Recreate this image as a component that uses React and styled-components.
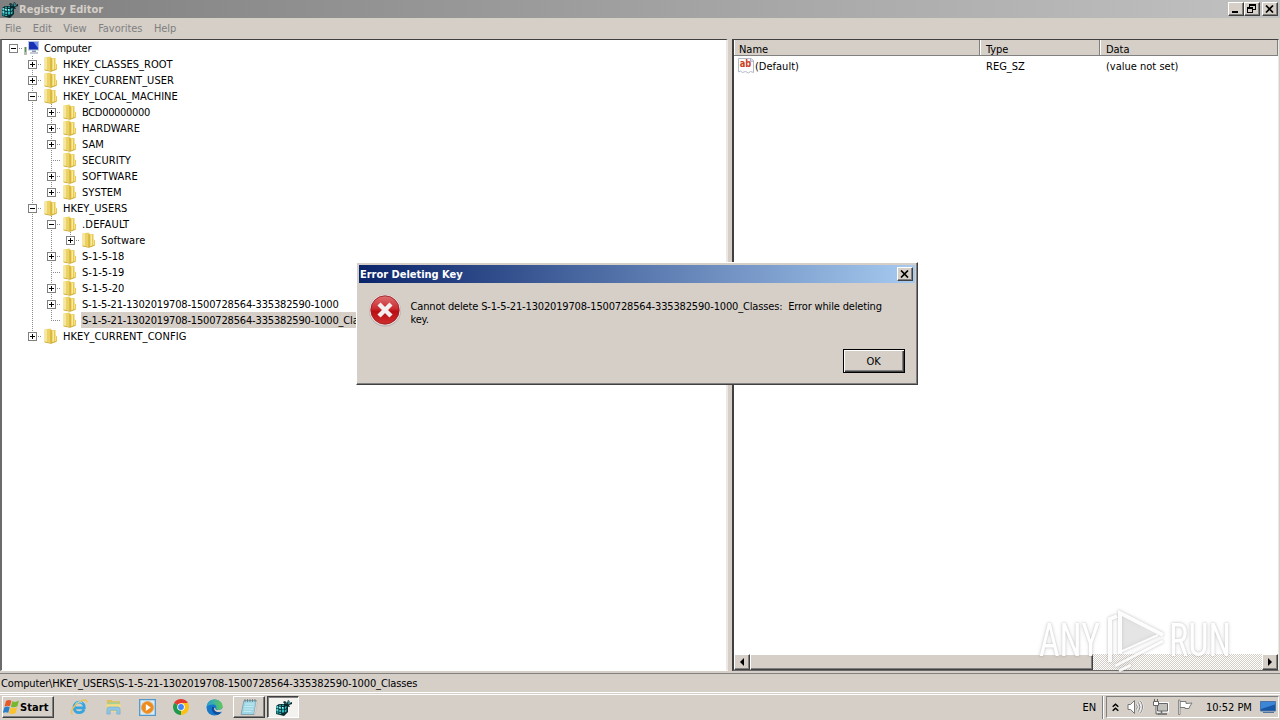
import React from "react";
import styled, { createGlobalStyle, css } from "styled-components";

const TREE = [
  { label: "Computer", level: 0, state: "open", root: true, track: -0.25 },
  { label: "HKEY_CLASSES_ROOT", level: 1, state: "closed" },
  { label: "HKEY_CURRENT_USER", level: 1, state: "closed" },
  { label: "HKEY_LOCAL_MACHINE", level: 1, state: "open" },
  { label: "BCD00000000", level: 2, state: "closed", track: -0.32 },
  { label: "HARDWARE", level: 2, state: "closed" },
  { label: "SAM", level: 2, state: "closed" },
  { label: "SECURITY", level: 2 },
  { label: "SOFTWARE", level: 2, state: "closed", track: 0.15 },
  { label: "SYSTEM", level: 2, state: "closed", last: true },
  { label: "HKEY_USERS", level: 1, state: "open" },
  { label: ".DEFAULT", level: 2, state: "open", track: 0.2 },
  { label: "Software", level: 3, state: "closed", last: true, track: 0.1 },
  { label: "S-1-5-18", level: 2, state: "closed" },
  { label: "S-1-5-19", level: 2 },
  { label: "S-1-5-20", level: 2, state: "closed" },
  {
    label: "S-1-5-21-1302019708-1500728564-335382590-1000",
    level: 2,
    state: "closed",
    track: -0.17,
  },
  {
    label: "S-1-5-21-1302019708-1500728564-335382590-1000_Classes",
    level: 2,
    last: true,
    selected: true,
    track: -0.17,
  },
  { label: "HKEY_CURRENT_CONFIG", level: 1, state: "closed", last: true, track: 0.07 },
];

const MENU = ["File", "Edit", "View", "Favorites", "Help"];

function RegeditIcon() {
  return (
    <svg width="17" height="17" viewBox="0 0 17 17">
      <path d="M1 7l3-2h7l2 1v7l-4 4-8-2z" fill="#062a2e" />
      <path
        d="M1.500 7.200h2v2.400h-2zM4.200 7.700h2v2.400h-2zM7 8h2v2.400H7zM1.500 10.300h2v2.400h-2zM4.200 10.800h2v2.400h-2zM7 11.100h2v2.400H7zM1.500 13.300h2v1.200h-2zM4.200 13.900h2v1.200h-2zM9.800 8l1.700-1.200v2.300L9.800 10.300zM9.800 11.300l1.700-1.200v2.300l-1.700 1.200zM4 5.700h2v1H4zM7 5.700h2v1H7z"
        fill="#32bcc0"
      />
      <path d="M1.500 7.200h1.200v1.200H1.500zM4.200 7.700h1.200v1.200H4.200zM1.500 10.300h1.200v1.200H1.500zM7 8h1v1.200H7z" fill="#c2ffff" />
      <path d="M8 3l2-1 2 2 1-3 1.500 1v2L17 3v2l-3 1 1 2-3-.5-2-2z" fill="#082629" />
      <path d="M10 3.500l1.500 1.500M13.300 2v3l2-1" stroke="#46b9bd" strokeWidth=".8" fill="none" />
    </svg>
  );
}

function ComputerIcon() {
  return (
    <svg width="16" height="16" viewBox="0 0 16 16">
      <path d="M1 7h3v8H1z" fill="#b7bdb2" />
      <path d="M2.500 7v5" stroke="#4f9a4a" />
      <path d="M5 1h11v9.500H5z" fill="#b9c5dc" />
      <path d="M6 2h9v7.500H6z" fill="#1730b4" />
      <path d="M10.500 2H15v6z" fill="#7390e8" />
      <path d="M9 10.500h4V12H9z" fill="#8c98b0" />
      <path d="M7 12h8v2H7z" fill="#c3cad6" />
    </svg>
  );
}

function FolderIcon() {
  return (
    <svg width="16" height="16" viewBox="0 0 16 16">
      <path d="M2.500 1.500l6-1 1 1V15l-7-1.200z" fill="#ecd265" />
      <path d="M2.500 1.500L5 1.100v13l-2.500-.4z" fill="#f6e7a0" />
      <path d="M9 2.500l4.500-.5v5.500l1.500.8v5l-6 2.200z" fill="#e9c84e" />
      <path d="M10.500 3H12v10.500l-1.500.7z" fill="#f7eca2" />
      <path d="M13 8h1v5.500h-1z" fill="#f4e18a" />
      <path d="M9 2v13" stroke="#cba629" />
      <path d="M2.500 14L9 15.300l5.500-2" stroke="#cfae3c" fill="none" />
    </svg>
  );
}

function StringIcon() {
  return (
    <svg width="16" height="16" viewBox="0 0 16 16">
      <path d="M.5.5H13l2.500 2v12l-3-1-2 1.500-3-1.500-3 1-2-1.500-2 1z" fill="#fdfdff" stroke="#b4bac8" />
      <path d="M12.500.8v2.500h3" fill="#dfe4ee" stroke="#9aa2b5" strokeWidth=".8" />
      <text
        x="1.800"
        y="9"
        fontFamily="DejaVu Sans"
        fontWeight="700"
        fontSize="10"
        fill="#c8421f"
        textLength="11.500"
        lengthAdjust="spacingAndGlyphs"
      >
        ab
      </text>
    </svg>
  );
}

function ErrorIcon() {
  return (
    <svg width="32" height="33" viewBox="0 0 32 33">
      <defs>
        <linearGradient id="errFill" x1="0" y1="0" x2="0" y2="1">
          <stop offset="0" stopColor="#dd7072" />
          <stop offset=".45" stopColor="#cb2c30" />
          <stop offset=".55" stopColor="#b90f14" />
          <stop offset="1" stopColor="#cf2d2d" />
        </linearGradient>
      </defs>
      <circle cx="16" cy="16.500" r="16" fill="#b3abaa" />
      <circle cx="16" cy="16" r="15.500" fill="#e9dcdb" />
      <circle cx="16" cy="16" r="14.200" fill="url(#errFill)" stroke="#98191d" strokeWidth=".8" />
      <path d="M10 10l12 12M22 10L10 22" stroke="#f3efee" strokeWidth="4.400" />
    </svg>
  );
}

function CloseGlyph() {
  return (
    <svg width="9" height="8" viewBox="0 0 9 8">
      <path d="M1 .5l7 7M8 .5l-7 7" stroke="#000" strokeWidth="1.700" />
    </svg>
  );
}

function RestoreGlyph() {
  return (
    <svg width="9" height="9" viewBox="0 0 9 9" shapeRendering="crispEdges">
      <path d="M2 0h7v6H6V5h2V2H3v1H2zM0 3h6v6H0zM1 5v3h4V5z" fill="#000" fillRule="evenodd" />
    </svg>
  );
}

function MinimizeGlyph() {
  return (
    <svg width="9" height="9" viewBox="0 0 9 9" shapeRendering="crispEdges">
      <path d="M1 7h6v2H1z" fill="#000" />
    </svg>
  );
}

function WindowsFlag() {
  return (
    <svg width="17" height="16" viewBox="0 0 17 16">
      <path d="M3 2c2-1.300 3.800-1 5.400-.2L7 7.300C5.400 6.500 3.500 6.400 1.500 7.500z" fill="#e8562a" />
      <path d="M9.200 2.200c2 1 4 1 6.800-.6l-1.600 5.700c-2.200 1.300-4.600 1.300-6.500.4z" fill="#79b82e" />
      <path d="M1.300 8.400c2-1.100 3.800-1 5.400-.2l-1.400 5.600C3.700 13 2 12.800-.2 13.900z" fill="#2c7ec8" />
      <path d="M7.600 8.600c2 1 4.400 1 6.600-.4l-1.600 5.800c-2.200 1.200-4.600 1.200-6.500.3z" fill="#fbc22c" />
    </svg>
  );
}

function ExplorerEIcon() {
  return (
    <svg width="18" height="18" viewBox="0 0 18 18">
      <path
        d="M14 11.500c-.8 1.900-2.500 3.100-4.800 3.100-3 0-5.200-2.200-5.200-5.100s2.200-5.300 5.200-5.300c3.100 0 5.300 2.300 5.100 5.700H5"
        fill="none"
        stroke="#36a5df"
        strokeWidth="2.800"
      />
      <path d="M2.500 16.500C-.5 14 4 7 9.500 3.700 13 1.500 17.500.8 16.800 4.500" fill="none" stroke="#eac15a" strokeWidth="1.500" />
      <path d="M5.500 5.500c2-2 5.500-2 7-.3" fill="none" stroke="#9bdcf7" />
    </svg>
  );
}

function ExplorerIcon() {
  return (
    <svg width="17" height="16" viewBox="0 0 18 16">
      <path d="M2 .5h5L8 2h8v8H2z" fill="#e0be58" />
      <path d="M3 3h12v2.500H3z" fill="#a5d298" />
      <path d="M1.500 5h15v8h-15z" fill="#f2dc88" />
      <path
        d="M2 10.500C2 8.500 3 8 5 8h8c2 0 3 .5 3 2.500V15.500h-3.500v-4h-7v4H2z"
        fill="#8fc5e6"
        stroke="#6ca7cc"
        strokeWidth=".6"
      />
    </svg>
  );
}

function MediaIcon() {
  return (
    <svg width="17" height="17" viewBox="0 0 17 17">
      <path d="M.7.7h15.600v15.600H.7z" fill="#d8ecf7" stroke="#5597c6" strokeWidth="1.300" />
      <circle cx="8.500" cy="8.500" r="6" fill="#ef8a1d" stroke="#e5a65a" />
      <path d="M6.800 5l5 3.500-5 3.500z" fill="#fff" />
    </svg>
  );
}

function ChromeIcon() {
  return (
    <svg width="16" height="16" viewBox="0 0 16 16">
      <path d="M8 8L1.100 4A8 8 0 0 1 14.900 4z" fill="#e33b2e" />
      <path d="M8 8l6.900-4A8 8 0 0 1 8 16z" fill="#fbc116" />
      <path d="M8 8v8A8 8 0 0 1 1.100 4z" fill="#219a4b" />
      <path d="M8 4h7v1.500L11.500 10 8 16l2-5z" fill="#fbc116" />
      <circle cx="8" cy="8" r="3.800" fill="#fff" />
      <circle cx="8" cy="8" r="2.900" fill="#4285f4" />
    </svg>
  );
}

function EdgeIcon() {
  return (
    <svg width="17" height="17" viewBox="0 0 17 17">
      <defs>
        <linearGradient id="edgeTop" x1="0" y1="0" x2="1" y2="0">
          <stop offset="0" stopColor="#259fd6" />
          <stop offset="1" stopColor="#60c957" />
        </linearGradient>
      </defs>
      <circle cx="8.500" cy="8.500" r="8" fill="#1777c9" />
      <path d="M.6 7.800C1.200 3.300 4.600.5 8.600.5c4.700 0 8 3.200 8 6.500 0 2.500-2 3.900-4.200 3.900-1.800 0-2.500-.6-2.200-1.300.8-2-.3-4.200-3.400-4.200C3.600 5.400 1.300 6.300.6 7.800z" fill="url(#edgeTop)" />
      <path d="M6.200 7.800c-1.300 3.800 1.200 7.500 5 7.700 2 0 3.600-1.100 4.600-2.600-4.200 1.800-8-1-7.300-4.800z" fill="#104e9d" />
      <path d="M9.400 9c-.3 1.300.6 2.200 3 2 2 0 3.800-1 4.600-2.200v3c-2.500 1.800-7.500 2-8.800-1.300-.4-1.500.5-2.200 1.200-1.500z" fill="#d6cfc8" />
    </svg>
  );
}

function NotepadIcon() {
  return (
    <svg width="18" height="18" viewBox="0 0 18 18">
      <path d="M4 2.500h12.500L14 16.500H1z" fill="#9ed6e3" stroke="#7898a4" strokeWidth=".8" />
      <path d="M5 6h9M4.500 8.500h9M4 11h9M3.500 13.500h8" stroke="#c4ebf2" />
      <path d="M5 1v3M7.500 1v3M10 1v3M12.500 1v3M15 1v3" stroke="#68777c" strokeWidth=".8" />
      <path d="M14 16.500l2.500-14 .8 1.500-2 12z" fill="#e5e9ea" stroke="#999" strokeWidth=".3" />
    </svg>
  );
}

function ChevronIcon() {
  return (
    <svg width="7" height="9" viewBox="0 0 7 9">
      <path d="M.7 3.700l2.800-2.500 2.800 2.500M.7 7.700l2.800-2.500 2.800 2.500" fill="none" stroke="#000" strokeWidth="1.500" />
    </svg>
  );
}

function SpeakerIcon() {
  return (
    <svg width="17" height="16" viewBox="0 0 17 16">
      <path d="M1 5.500h2.500l4-4v13l-4-4H1z" fill="#fff" stroke="#777" />
      <path d="M9.500 5.500q1.500 2.500 0 5M11.500 3.500q3 4.500 0 9M13.500 2q4 6 0 12" fill="none" stroke="#fff" strokeWidth="2" />
      <path d="M9.500 5.500q1.500 2.500 0 5M11.500 3.500q3 4.500 0 9M13.500 2q4 6 0 12" fill="none" stroke="#7d7d7d" />
    </svg>
  );
}

function NetworkIcon() {
  return (
    <svg width="17" height="17" viewBox="0 0 17 17">
      <path d="M5.500 4.500h10v7.500h-10z" fill="#c9c9c9" stroke="#fff" strokeWidth="3" />
      <path d="M5.500 4.500h10v7.500h-10z" fill="#c3c1be" stroke="#666" />
      <path d="M9.500 12v2M6 15h9" stroke="#666" strokeWidth="1.500" />
      <path d="M1.500 2.500h5v4h-5z" fill="#fff" stroke="#666" />
      <path d="M2.500 0v3M5.500 0v3M4 7v8h3" fill="none" stroke="#666" />
    </svg>
  );
}

function FlagIcon() {
  return (
    <svg width="16" height="16" viewBox="0 0 16 16">
      <path d="M3 2.500h6v2l6-.5-2 3-1 2.500H8v-1H3z" fill="#fff" stroke="#7a7a7a" />
      <path d="M1.500 1H3v14.500H1.500z" fill="#fff" stroke="#777" strokeWidth=".8" />
    </svg>
  );
}

function DesktopIcon() {
  return (
    <svg width="16" height="14" viewBox="0 0 16 14">
      <path d="M.5 1.500h15v9.500H.5z" fill="#1857a4" stroke="#4b73a5" />
      <path d="M1 2h14v2.500L1 9z" fill="#3b86d6" />
      <path d="M3 12.500h11" stroke="#53749c" />
    </svg>
  );
}

function Watermark() {
  return (
    <WatermarkLayer>
      <svg width="210" height="72" viewBox="0 0 210 72">
        <path d="M84 10l36 20-36 17z" fill="#d8d8d8" fillOpacity=".3" />
        <g fill="none" stroke="#fff" strokeOpacity=".95" strokeWidth="4">
          <path d="M83 48V7l43 22" />
          <path d="M83 46l38-17" strokeWidth="2" />
          <path d="M80 10l-7 3v43" />
          <path d="M78 60l48-25M82 65l12-6" strokeWidth="3" />
        </g>
        <g fontFamily="Roboto, sans-serif" fontSize="47" fill="#fff">
          <text x="2" y="50" textLength="61" lengthAdjust="spacingAndGlyphs">ANY</text>
          <text x="132" y="50" textLength="62" lengthAdjust="spacingAndGlyphs">RUN</text>
        </g>
      </svg>
    </WatermarkLayer>
  );
}

function TreeRow({ item }) {
  const { label, level, state, root, last, selected, track } = item;
  const guides = Array.from({ length: level }, (_, i) => i);

  return (
    <Row>
      {guides.map((i) => (
        <Guide key={i} $line={i > 0 ? "full" : "none"} />
      ))}
      <Guide $line={root ? "none" : last ? "half" : "full"} $branch>
        {state && <Expander $closed={state === "closed"} />}
      </Guide>
      {root ? <ComputerIcon /> : <FolderIcon />}
      <RowLabel $selected={selected} $track={track}>
        {label}
      </RowLabel>
    </Row>
  );
}

function App() {
  return (
    <Screen>
      <GlobalStyle />
      <TitleBar>
        <RegeditIcon />
        <Title>Registry Editor</Title>
        <CaptionButton $end>
          <MinimizeGlyph />
        </CaptionButton>
        <CaptionButton>
          <RestoreGlyph />
        </CaptionButton>
        <CaptionButton $gap>
          <CloseGlyph />
        </CaptionButton>
      </TitleBar>
      <MenuBar>
        {MENU.map((name) => (
          <MenuItem key={name}>{name}</MenuItem>
        ))}
      </MenuBar>

      <Panes>
        <TreePane>
          {TREE.map((item) => (
            <TreeRow key={item.label} item={item} />
          ))}
        </TreePane>
        <ListPane>
          <ListHeader>
            <HeaderCell>Name</HeaderCell>
            <HeaderCell>Type</HeaderCell>
            <HeaderCell>Data</HeaderCell>
          </ListHeader>
          <ListRow>
            <NameCell>
              <StringIcon />
              <span>(Default)</span>
            </NameCell>
            <ListCell>REG_SZ</ListCell>
            <ListCell>(value not set)</ListCell>
          </ListRow>
          <ScrollBar>
            <ScrollButton>
              <Arrow />
            </ScrollButton>
            <Thumb />
            <ScrollButton $end>
              <Arrow $right />
            </ScrollButton>
          </ScrollBar>
        </ListPane>
      </Panes>

      <StatusBar>
        Computer\HKEY_USERS\S-1-5-21-1302019708-1500728564-335382590-1000_Classes
      </StatusBar>

      <TaskBar>
        <StartButton>
          <WindowsFlag />
          Start
        </StartButton>
        <QuickLaunch>
          <ExplorerEIcon />
          <ExplorerIcon />
          <MediaIcon />
          <ChromeIcon />
          <EdgeIcon />
        </QuickLaunch>
        <TaskButton>
          <NotepadIcon />
        </TaskButton>
        <TaskButton $active>
          <RegeditIcon />
        </TaskButton>
        <Language>EN</Language>
        <Tray>
          <ChevronIcon />
          <SpeakerIcon />
          <NetworkIcon />
          <FlagIcon />
          <Clock>10:52 PM</Clock>
          <DesktopIcon />
        </Tray>
      </TaskBar>

      <Watermark />

      <Dialog>
        <DialogTitle>
          <DialogName>Error Deleting Key</DialogName>
          <CaptionButton $end>
            <CloseGlyph />
          </CaptionButton>
        </DialogTitle>
        <DialogBody>
          <ErrorIcon />
          <Message>
            Cannot delete S-1-5-21-1302019708-1500728564-335382590-1000_Classes:{"\u00a0 "}
            Error while deleting key.
          </Message>
        </DialogBody>
        <OkButton>OK</OkButton>
      </Dialog>
    </Screen>
  );
}

const GlobalStyle = createGlobalStyle`
  * {
    box-sizing: border-box;
  }

  body {
    margin: 0;
    overflow: hidden;
  }

  svg {
    display: block;
    flex: none;
  }
`;

const raised = css`
  border: 1px solid;
  border-color: #fff #404040 #404040 #fff;
  box-shadow: inset -1px -1px 0 #808080;
  background-color: #d5cfc8;
`;

const Screen = styled.div`
  position: relative;
  display: flex;
  flex-direction: column;
  width: 1280px;
  height: 720px;
  overflow: hidden;
  background-color: #d5cfc8;
  color: #000;
  font-family: "DejaVu Sans Condensed", "DejaVu Sans", sans-serif;
  font-stretch: condensed;
  font-size: 11px;
  letter-spacing: -0.04px;
  white-space: nowrap;
`;

const TitleBar = styled.div`
  display: flex;
  align-items: center;
  height: 18px;
  padding: 0 2px 0 1px;
  background: linear-gradient(to right, #808080, #c1c1c1);
`;

const Title = styled.div`
  margin-left: 1px;
  color: #d5cfc8;
  font-weight: 700;
  letter-spacing: 0.02px;
`;

const CaptionButton = styled.button`
  ${raised}
  display: flex;
  align-items: center;
  justify-content: center;
  flex: none;
  width: 16px;
  height: 14px;
  padding: 0 1px 1px 0;
  margin-left: ${(props) => (props.$end ? "auto" : props.$gap ? "2px" : "0")};
`;

const MenuBar = styled.div`
  display: flex;
  align-items: center;
  gap: 11.5px;
  height: 21px;
  padding: 0 5px;
  color: #808080;
`;

const MenuItem = styled.div``;

const Panes = styled.div`
  display: flex;
  gap: 4px;
  height: 632px;
`;

const TreePane = styled.div`
  width: 728px;
  overflow: hidden;
  border: solid;
  border-width: 1px 2px 1px 2px;
  border-color: #404040 #ece8e4 #fff #6b6b6b;
  background-color: #fff;
`;

const Row = styled.div`
  display: flex;
  height: 16px;
  padding-left: 2px;
`;

const Guide = styled.div`
  display: flex;
  align-items: center;
  justify-content: center;
  flex: none;
  width: 19px;
  height: 16px;
  background-image:
    repeating-linear-gradient(to bottom, #8c8c8c 0 1px, transparent 1px 2px),
    repeating-linear-gradient(to right, #8c8c8c 0 1px, transparent 1px 2px);
  background-repeat: no-repeat;
  background-position: 9px 0, 9px 8px;
  background-size:
    1px ${(props) => ({ full: "16px", half: "8px", none: "0" })[props.$line]},
    ${(props) => (props.$branch ? "10px" : "0")} 1px;
`;

const Expander = styled.span`
  width: 9px;
  height: 9px;
  margin-top: 1px;
  border: 1px solid #808080;
  background-color: #fff;
  background-image:
    linear-gradient(#000, #000),
    linear-gradient(#000, #000);
  background-repeat: no-repeat;
  background-position: 1px 3px, 3px 1px;
  background-size: 5px 1px, ${(props) => (props.$closed ? "1px 5px" : "0 0")};
`;

const RowLabel = styled.span`
  height: 16px;
  margin-left: 4px;
  padding: 0 1px;
  line-height: 17px;
  letter-spacing: ${(props) => props.$track ?? 0.03}px;
  background-color: ${(props) => (props.$selected ? "#d5cfc8" : "transparent")};
`;

const ListPane = styled.div`
  display: flex;
  flex-direction: column;
  width: 547px;
  border: solid;
  border-width: 1px 1px 1px 2px;
  border-color: #404040 #ece8e4 #6b6b6b #404040;
  background-color: #fff;
`;

const columns = css`
  display: grid;
  grid-template-columns: 246px 120px 1fr;
`;

const ListHeader = styled.div`
  ${columns}
  height: 16px;
  background-color: #d5cfc8;
  border-bottom: 1px solid #808080;
`;

const HeaderCell = styled.div`
  height: 15px;
  padding-left: 6px;
  line-height: 19px;
  border-right: 1px solid #808080;
  box-shadow: inset 1px 0 0 #fff;

  &:first-child {
    padding-left: 5px;
  }
`;

const ListRow = styled.div`
  ${columns}
  height: 20px;
  line-height: 21px;
  letter-spacing: 0;
`;

const ListCell = styled.div`
  padding-left: 6px;
`;

const NameCell = styled.div`
  display: flex;
  gap: 1px;
  padding-left: 4px;

  svg {
    margin-top: 2px;
  }
`;

const ScrollBar = styled.div`
  display: flex;
  height: 16px;
  margin-top: auto;
  background: repeating-conic-gradient(#d5cfc8 0 25%, #fff 0 50%) 0 0 / 2px 2px;
`;

const ScrollButton = styled.button`
  ${raised}
  display: flex;
  align-items: center;
  justify-content: center;
  width: 16px;
  height: 16px;
  padding: 0;
  margin-left: ${(props) => (props.$end ? "auto" : "0")};
`;

const Arrow = styled.span`
  border: 4px solid transparent;
  border-width: ${(props) => (props.$right ? "4px 0 4px 4px" : "4px 4px 4px 0")};
  border-${(props) => (props.$right ? "left" : "right")}-color: #000;
`;

const Thumb = styled.div`
  ${raised}
  width: 343px;
`;

const StatusBar = styled.div`
  height: 20px;
  margin-top: 2px;
  padding-left: 1px;
  border-top: 1px solid #808080;
  border-bottom: 1px solid #fff;
  line-height: 20px;
  letter-spacing: -0.14px;
`;

const TaskBar = styled.div`
  display: flex;
  align-items: flex-start;
  height: 26px;
  margin-top: 1px;
  padding: 1px 1px 0 2px;
  border-top: 1px solid #fff;
`;

const StartButton = styled.button`
  ${raised}
  display: flex;
  align-items: center;
  width: 52px;
  height: 22px;
  padding: 0;
  font: inherit;
  font-weight: 700;
  letter-spacing: 0.1px;
`;

const QuickLaunch = styled.div`
  display: flex;
  align-items: center;
  gap: 17px;
  height: 22px;
  margin-left: 16px;
`;

const TaskButton = styled.button`
  ${raised}
  display: flex;
  align-items: center;
  justify-content: center;
  width: 32px;
  height: 22px;
  margin-left: 10px;
  padding: 0;

  ${(props) =>
    props.$active &&
    css`
      margin-left: 2px;
      border-color: #404040 #fff #fff #404040;
      box-shadow: inset 1px 1px 0 #808080;
      background-color: #f4f2ef;
    `}
`;

const Language = styled.div`
  margin-left: auto;
  padding-right: 6px;
  line-height: 23px;
  border-right: 1px solid #808080;
  box-shadow: 1px 0 0 #fff;
`;

const Tray = styled.div`
  display: flex;
  align-items: center;
  width: 173px;
  height: 22px;
  margin-left: 3px;
  padding: 0 2px 0 5px;
  gap: 8px;
  border: 1px solid;
  border-color: #808080 #fff #fff #808080;
`;

const Clock = styled.div`
  flex: 1;
  margin-left: 5px;
`;

const WatermarkLayer = styled.div`
  position: absolute;
  top: 606px;
  left: 1037px;
  opacity: 0.9;
  filter: drop-shadow(0 0 1px rgba(90, 90, 90, 0.35)) drop-shadow(0 0 2px rgba(90, 90, 90, 0.15));
`;

const Dialog = styled.div`
  ${raised}
  position: absolute;
  top: 262px;
  left: 356px;
  display: flex;
  flex-direction: column;
  width: 562px;
  height: 123px;
  padding: 2px;
`;

const DialogTitle = styled.div`
  display: flex;
  align-items: center;
  height: 18px;
  padding-right: 2px;
  background: linear-gradient(to right, #0a246a, #a6caf0);
`;

const DialogName = styled.div`
  padding-left: 1px;
  color: #fff;
  font-weight: 700;
  letter-spacing: -0.02px;
`;

const DialogBody = styled.div`
  display: flex;
  padding: 11px 0 0 10px;
`;

const Message = styled.div`
  width: 490px;
  margin: 6px 0 0 9.5px;
  line-height: 13px;
  letter-spacing: -0.16px;
  white-space: normal;
`;

const OkButton = styled.button`
  width: 62px;
  height: 24px;
  margin: auto 10px 9px auto;
  padding: 0 1px 0 0;
  border: 1px solid #000;
  box-shadow:
    inset 1px 1px 0 #fff,
    inset -1px -1px 0 #404040,
    inset -2px -2px 0 #808080;
  background-color: #d5cfc8;
  font: inherit;
  letter-spacing: inherit;
`;

export default App;
